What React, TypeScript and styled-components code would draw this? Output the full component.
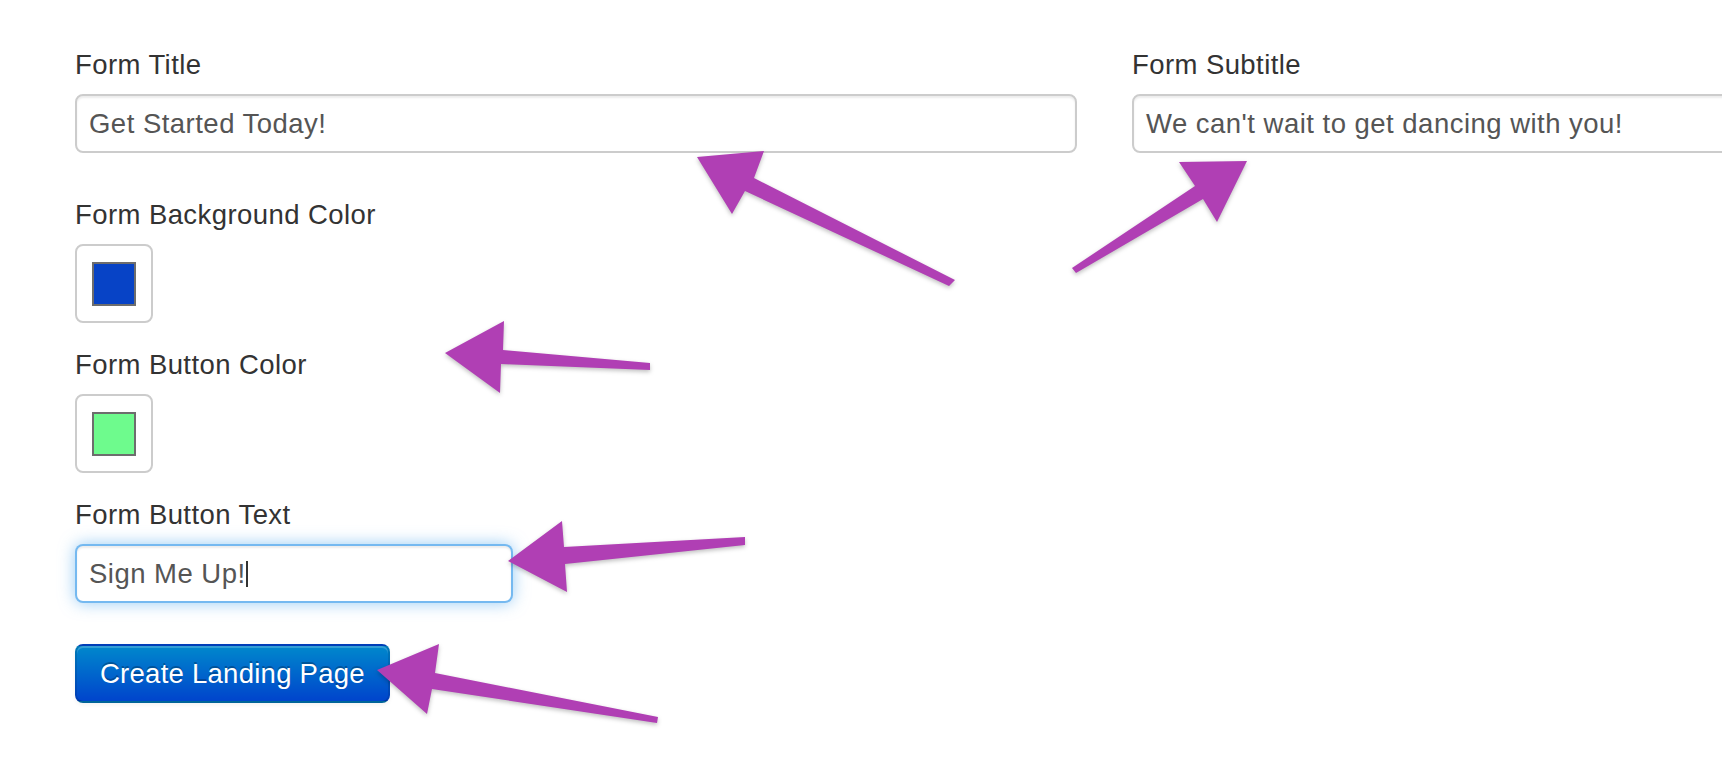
import React from "react";
import styled, { createGlobalStyle } from "styled-components";

const GlobalStyle = createGlobalStyle`
  html, body {
    margin: 0;
    padding: 0;
    background: #ffffff;
    overflow: hidden;
  }
  body {
    font-family: "Liberation Sans", Arial, Helvetica, sans-serif;
    font-size: 27.5px;
    line-height: 39px;
    color: #333333;
  }
`;

const Stage = styled.div`
  position: relative;
  width: 1722px;
  height: 762px;
  overflow: hidden;
`;

const Form = styled.form`
  display: grid;
  grid-template-columns: 1002px 1002px;
  column-gap: 55px;
  align-items: start;
  padding: 45px 0 0 75px;
  margin: 0;
`;

const Column = styled.div`
  display: flex;
  flex-direction: column;
  align-items: flex-start;
`;

const Field = styled.div`
  display: flex;
  flex-direction: column;
  align-items: flex-start;
  margin-bottom: 22px;
  align-self: stretch;
`;

const Label = styled.label`
  display: block;
  font-size: 27.5px;
  line-height: 39px;
  letter-spacing: 0.42px;
  color: #333333;
  margin-bottom: 10px;
`;

const TextBox = styled.div<{ $width?: string; $focused?: boolean }>`
  box-sizing: border-box;
  display: flex;
  align-items: center;
  width: ${(p) => p.$width ?? "100%"};
  height: 59px;
  padding: 0 12px;
  margin-bottom: 20px;
  border: 2px solid ${(p) => (p.$focused ? "rgba(82, 168, 236, 0.8)" : "#cccccc")};
  border-radius: 8px;
  background: #ffffff;
  color: #555555;
  font-size: 27.5px;
  line-height: 39px;
  letter-spacing: 0.48px;
  white-space: nowrap;
  box-shadow: ${(p) =>
    p.$focused
      ? "inset 0 2px 2px rgba(0,0,0,0.075), 0 0 16px rgba(82, 168, 236, 0.6)"
      : "inset 0 2px 2px rgba(0,0,0,0.075)"};
`;

const Caret = styled.span`
  display: inline-block;
  width: 2px;
  height: 26px;
  margin-left: 0;
  background: #333333;
`;

const SwatchBox = styled.div`
  box-sizing: border-box;
  width: 78px;
  height: 79px;
  display: flex;
  align-items: center;
  justify-content: center;
  padding-top: 1px;
  border: 2px solid #cccccc;
  border-radius: 8px;
  background: #ffffff;
`;

const SwatchFill = styled.div<{ $color: string }>`
  box-sizing: border-box;
  width: 44px;
  height: 44px;
  border: 2px solid #6d6d6d;
  background: ${(p) => p.$color};
`;

const PrimaryButton = styled.button`
  box-sizing: border-box;
  height: 59px;
  padding: 0 23px;
  margin-top: -1px;
  border: 2px solid rgba(0, 0, 0, 0.1);
  border-bottom-color: rgba(0, 0, 0, 0.25);
  border-radius: 8px;
  background: linear-gradient(to bottom, #0088cc, #0044cc);
  color: #ffffff;
  font-family: "Liberation Sans", Arial, Helvetica, sans-serif;
  font-size: 27.5px;
  line-height: 39px;
  letter-spacing: 0.26px;
  text-shadow: 0 -2px 0 rgba(0, 0, 0, 0.25);
  box-shadow: inset 0 2px 0 rgba(255, 255, 255, 0.2), 0 2px 4px rgba(0, 0, 0, 0.05);
  cursor: pointer;
`;

const Annotations = styled.svg`
  position: absolute;
  top: 0;
  left: 0;
  width: 1722px;
  height: 762px;
  pointer-events: none;
  filter: drop-shadow(0 2px 2px rgba(0, 0, 0, 0.25));
`;

const arrows: string[] = [
  // to Form Title input
  "697,157 764,151 754,178 955,280 949,286 745,191 732,214",
  // to Form Subtitle input
  "1247,161 1179,162 1195,186 1072,268 1076,273 1203,199 1217,222",
  // to Form Button Color
  "445,353 504,321 503,350 650,363 650,370 501,364 500,393",
  // to Form Button Text input
  "508,561 562,521 564,547 745,537 745,545 565,564 567,592",
  // to Create Landing Page button
  "377,670 439,644 435,673 658,717 657,723 432,689 427,714",
];

export default function App() {
  return (
    <Stage>
      <GlobalStyle />
      <Form onSubmit={(e) => e.preventDefault()}>
        <Column>
          <Field>
            <Label>Form Title</Label>
            <TextBox>Get Started Today!</TextBox>
          </Field>
          <Field>
            <Label>Form Background Color</Label>
            <SwatchBox>
              <SwatchFill $color="#0743c6" />
            </SwatchBox>
          </Field>
          <Field>
            <Label>Form Button Color</Label>
            <SwatchBox>
              <SwatchFill $color="#6efb8d" />
            </SwatchBox>
          </Field>
          <Field>
            <Label>Form Button Text</Label>
            <TextBox $width="438px" $focused>
              Sign Me Up!
              <Caret />
            </TextBox>
          </Field>
          <PrimaryButton type="submit">Create Landing Page</PrimaryButton>
        </Column>
        <Column>
          <Field>
            <Label>Form Subtitle</Label>
            <TextBox>We can't wait to get dancing with you!</TextBox>
          </Field>
        </Column>
      </Form>
      <Annotations viewBox="0 0 1722 762">
        {arrows.map((pts, i) => (
          <polygon key={i} points={pts} fill="#b03fb4" />
        ))}
      </Annotations>
    </Stage>
  );
}
